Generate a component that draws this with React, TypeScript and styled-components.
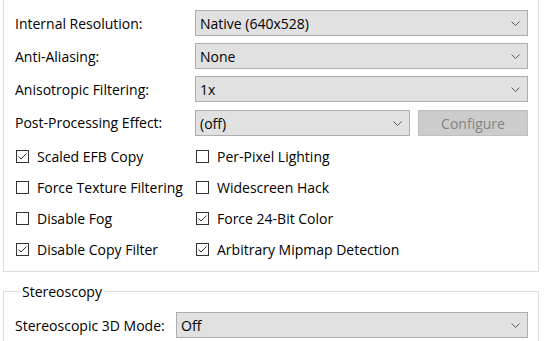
import styled, { createGlobalStyle } from "styled-components";

const GlobalStyle = createGlobalStyle`
  html, body {
    margin: 0;
    padding: 0;
    background: #ffffff;
    overflow: hidden;
  }
  body {
    font-family: "Open Sans", "Noto Sans", sans-serif;
    font-size: 14px;
    color: #000000;
  }
`;

const Page = styled.div`
  width: 536px;
  padding-left: 3px;
`;

const Group = styled.fieldset<{ $top?: number }>`
  margin: ${(p) => p.$top ?? 0}px 0 0 0;
  padding: 0 10px 6px 11px;
  border: 1px solid #dcdcdc;
  min-width: 0;
`;

const Legend = styled.legend`
  margin-left: 6px;
  padding: 0 2px 0 1px;
  line-height: 19px;
`;

const FormGrid = styled.div<{ $label: number }>`
  display: grid;
  grid-template-columns: ${(p) => p.$label}px 1fr;
  row-gap: 7px;
  align-items: center;
`;

const Label = styled.div`
  white-space: nowrap;
`;

const Select = styled.div`
  height: 26px;
  box-sizing: border-box;
  border: 1px solid #adadad;
  background: #e1e1e1;
  display: flex;
  align-items: center;
  justify-content: space-between;
  padding: 0 7px 0 4px;
`;

const PostRow = styled.div`
  display: flex;
  gap: 8px;
  margin-top: 1px;
`;

const Button = styled.div`
  width: 110px;
  height: 26px;
  box-sizing: border-box;
  border: 1px solid #bfbfbf;
  background: #cccccc;
  color: #838383;
  display: flex;
  align-items: center;
  justify-content: center;
`;

const Checks = styled.div`
  display: grid;
  grid-template-columns: 180px 1fr;
  margin-top: 5px;
`;

const CheckRow = styled.div`
  height: 31px;
  display: flex;
  align-items: center;
  gap: 8px;
  padding-left: 1px;
  white-space: nowrap;
`;

const Box = styled.span`
  width: 13px;
  height: 13px;
  box-sizing: border-box;
  border: 1px solid #333333;
  background: #ffffff;
  display: flex;
  align-items: center;
  justify-content: center;
  flex: none;
`;

const Spacer = styled.div`
  height: 15px;
`;

const StereoBody = styled.div`
  padding-top: 11px;
`;

function Chevron() {
  return (
    <svg width="9" height="5" viewBox="0 0 9 5">
      <path d="M0.5 0.5 L4.5 4.5 L8.5 0.5" fill="none" stroke="#5a5a5a" strokeWidth="1" />
    </svg>
  );
}

function Dropdown({ value, style }: { value: string; style?: React.CSSProperties }) {
  return (
    <Select style={style}>
      <span>{value}</span>
      <Chevron />
    </Select>
  );
}

function Check({ label, checked }: { label: string; checked?: boolean }) {
  return (
    <CheckRow>
      <Box>
        {checked && (
          <svg width="11" height="11" viewBox="0 0 11 11">
            <path d="M1.5 5.5 L4 8 L9.5 2.5" fill="none" stroke="#333333" strokeWidth="1" />
          </svg>
        )}
      </Box>
      <span>{label}</span>
    </CheckRow>
  );
}

const checks: [string, boolean][] = [
  ["Scaled EFB Copy", true],
  ["Per-Pixel Lighting", false],
  ["Force Texture Filtering", false],
  ["Widescreen Hack", false],
  ["Disable Fog", false],
  ["Force 24-Bit Color", true],
  ["Disable Copy Filter", true],
  ["Arbitrary Mipmap Detection", true],
];

export default function App() {
  return (
    <Page>
      <GlobalStyle />
      <Group $top={-6}>
        <Spacer />
        <FormGrid $label={180}>
          <Label>Internal Resolution:</Label>
          <Dropdown value="Native (640x528)" />
          <Label>Anti-Aliasing:</Label>
          <Dropdown value="None" />
          <Label>Anisotropic Filtering:</Label>
          <Dropdown value="1x" />
          <Label>Post-Processing Effect:</Label>
          <PostRow>
            <Dropdown value="(off)" style={{ flex: 1 }} />
            <Button>Configure</Button>
          </PostRow>
        </FormGrid>
        <Checks>
          {checks.map(([l, c]) => (
            <Check key={l} label={l} checked={c} />
          ))}
        </Checks>
      </Group>
      <Group $top={10}>
        <Legend>Stereoscopy</Legend>
        <StereoBody>
          <FormGrid $label={161}>
            <Label>Stereoscopic 3D Mode:</Label>
            <Dropdown value="Off" />
          </FormGrid>
        </StereoBody>
      </Group>
    </Page>
  );
}
